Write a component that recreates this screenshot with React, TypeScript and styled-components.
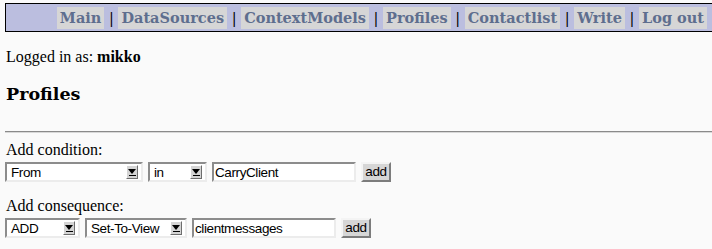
import styled, { createGlobalStyle } from 'styled-components'

const GlobalStyle = createGlobalStyle`
  html, body {
    margin: 0;
    padding: 0;
    background: #fafafa;
    overflow: hidden;
  }
  body {
    font-family: "Liberation Serif", "Times New Roman", serif;
    font-size: 16px;
    color: #000;
  }
`

const Page = styled('div')`
  padding: 3px 0 0 5px;
`

const Nav = styled('div')`
  background: #bbbedf;
  border: 1px solid #000;
  border-right: none;
  padding: 3px 5px 2px 0;
  text-align: right;
  line-height: 22px;
  font-family: "DejaVu Serif", serif;
  font-weight: bold;
  font-size: 14.5px;
  white-space: nowrap;
`

const NavLink = styled('a')`
  display: inline-block;
  vertical-align: top;
  height: 22px;
  padding: 0 3px;
  background: #d6d6d6;
  color: #5e6e8e;
  text-decoration: none;
`

const Sep = styled('span')`
  color: #000;
  font-weight: normal;
`

const Text = styled('p')`
  margin: 16px 1px;
`

const Heading = styled('h3')`
  margin: 18px 1px 0;
  font-family: "DejaVu Serif", serif;
  font-size: 17.5px;
`

const Rule = styled('hr')`
  margin: 27px 0 0;
  border: none;
  border-top: 1px solid #8a8a8a;
  border-bottom: 1px solid #d8d8d8;
  height: 0;
`

const Form = styled('form')`
  padding-top: 8px;
`

const Group = styled('div')`
  margin-bottom: 15px;
`

const Label = styled('div')`
  padding-left: 1px;
  line-height: 18px;
  margin-bottom: 3px;
`

const Row = styled('div')`
  display: flex;
  align-items: center;
  gap: 5px;
`

const Field = styled('div')<{ $w: number }>`
  box-sizing: border-box;
  width: ${(p) => p.$w}px;
  height: 20px;
  border: 2px solid;
  border-color: #8c8c8c #ececec #ececec #8c8c8c;
  background: #fff;
  display: flex;
  align-items: center;
  font-family: "Liberation Sans", Arial, sans-serif;
  font-size: 13.5px;
  letter-spacing: -0.4px;
  color: #000;
`

const Value = styled('span')<{ $pad?: number }>`
  flex: 1;
  padding-left: ${(p) => p.$pad ?? 4}px;
  white-space: nowrap;
  overflow: hidden;
`

const Arrow = styled('span')`
  box-sizing: border-box;
  width: 12px;
  height: 14px;
  margin-right: 3px;
  background: #d4d4d4;
  border: 1px solid;
  border-color: #fff #6e6e6e #6e6e6e #fff;
  display: flex;
  flex-direction: column;
  align-items: center;
  justify-content: center;
  gap: 1px;

  &::before {
    content: '';
    width: 0;
    height: 0;
    border-left: 4px solid transparent;
    border-right: 4px solid transparent;
    border-top: 5px solid #000;
  }
  &::after {
    content: '';
    width: 7px;
    height: 1px;
    background: #000;
  }
`

const Button = styled('button')`
  box-sizing: border-box;
  width: 30px;
  height: 20px;
  padding: 0 0 1px;
  background: #d6d6d6;
  border: 2px solid;
  border-color: #f4f4f4 #7c7c7c #7c7c7c #f4f4f4;
  font-family: "Liberation Sans", Arial, sans-serif;
  font-size: 13.5px;
  letter-spacing: -0.4px;
  color: #000;
`

const Select = ({ w, value }: { w: number; value: string }) => (
  <Field $w={w}>
    <Value>{value}</Value>
    <Arrow />
  </Field>
)

const Input = ({ w, value }: { w: number; value: string }) => (
  <Field $w={w}>
    <Value $pad={1}>{value}</Value>
  </Field>
)

const links = ['Main', 'DataSources', 'ContextModels', 'Profiles', 'Contactlist', 'Write', 'Log out']

const App = () => {
  return (
    <Page>
      <GlobalStyle />
      <Nav>
        {links.map((l, i) => (
          <span key={l}>
            {i > 0 && <Sep> | </Sep>}
            <NavLink href="#">{l}</NavLink>
          </span>
        ))}
      </Nav>
      <Text>
        Logged in as: <b>mikko</b>
      </Text>
      <Heading>Profiles</Heading>
      <Rule />
      <Form onSubmit={(e) => e.preventDefault()}>
        <Group>
          <Label>Add condition:</Label>
          <Row>
            <Select w={138} value="From" />
            <Select w={59} value="in" />
            <Input w={144} value="CarryClient" />
            <Button type="button">add</Button>
          </Row>
        </Group>
        <Group>
          <Label>Add consequence:</Label>
          <Row>
            <Select w={75} value="ADD" />
            <Select w={102} value="Set-To-View" />
            <Input w={144} value="clientmessages" />
            <Button type="button">add</Button>
          </Row>
        </Group>
      </Form>
    </Page>
  )
}

export default App
